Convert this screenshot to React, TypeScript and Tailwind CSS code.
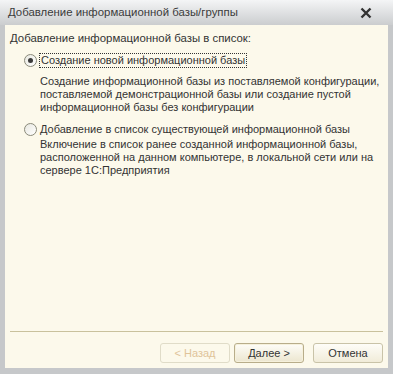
const font = { fontFamily: '"Liberation Sans", Arial, sans-serif' };

const Radio = ({ checked }: { checked?: boolean }) => (
  <span className="flex h-[13px] w-[13px] shrink-0 items-center justify-center rounded-full border border-[#8a8a7a] bg-gradient-to-br from-[#e8e8e0] to-[#ffffff]">
    {checked && <span className="h-[5px] w-[5px] rounded-full bg-[#3a3a3a]" />}
  </span>
);

export default function App() {
  return (
    <div
      className="flex h-[374px] w-[393px] flex-col whitespace-nowrap bg-[#c6c8ca] text-[11px] text-[#333]"
      style={font}
    >
      {/* title bar */}
      <div className="flex h-[25px] shrink-0 items-center justify-between bg-gradient-to-b from-[#f4f5f6] to-[#cbcdcf] pl-[8px] pr-[21px]">
        <span className="text-[11.4px] text-[#3b3b3b]">Добавление информационной базы/группы</span>
        <svg width="12" height="12" viewBox="0 0 12 12">
          <path d="M1.5 1.5L10.5 10.5M10.5 1.5L1.5 10.5" stroke="#333" strokeWidth="2.4" />
        </svg>
      </div>

      <div className="mx-[5px] mb-[6px] flex grow flex-col bg-[#fcf9eb] px-[5px]">
        <div className="mt-[6px] text-[11.4px] leading-[14px]">Добавление информационной базы в список:</div>

        <div className="mt-[8px] flex items-center gap-[2px] pl-[14px]">
          <Radio checked />
          <span className="border border-dotted border-[#333] px-[1px] leading-[13px]">
            Создание новой информационной базы
          </span>
        </div>
        <div className="mt-[7px] pl-[30px] leading-[13px]">
          Создание информационной базы из поставляемой конфигурации,
          <br />
          поставляемой демонстрационной базы или создание пустой
          <br />
          информационной базы без конфигурации
        </div>

        <div className="mt-[8px] flex items-center gap-[3px] pl-[14px]">
          <Radio />
          <span className="leading-[15px]">Добавление в список существующей информационной базы</span>
        </div>
        <div className="mt-[1px] pl-[30px] leading-[13px]">
          Включение в список ранее созданной информационной базы,
          <br />
          расположенной на данном компьютере, в локальной сети или на
          <br />
          сервере 1С:Предприятия
        </div>

        <div className="grow" />
        <div className="h-px bg-[#c9c19c]" />
        <div className="flex justify-end gap-[4px] pb-[5px] pt-[11px]">
          <button className="h-[20px] w-[70px] rounded-[3px] border border-[#e0dcc8] bg-[#fcf9eb] text-[11px] text-[#e0c49a]">
            &lt; Назад
          </button>
          <button className="h-[20px] w-[70px] rounded-[3px] border border-[#b8ad8a] bg-gradient-to-b from-[#fefdf8] to-[#ece6cf] text-[11px] text-[#333] shadow-[inset_0_0_0_1px_#f6f1dc]">
            Далее &gt;
          </button>
          <button className="ml-[5px] h-[20px] w-[70px] rounded-[3px] border border-[#c9c3a8] bg-gradient-to-b from-[#fefdf8] to-[#f1ecd9] text-[11px] text-[#333]">
            Отмена
          </button>
        </div>
      </div>
    </div>
  );
}
